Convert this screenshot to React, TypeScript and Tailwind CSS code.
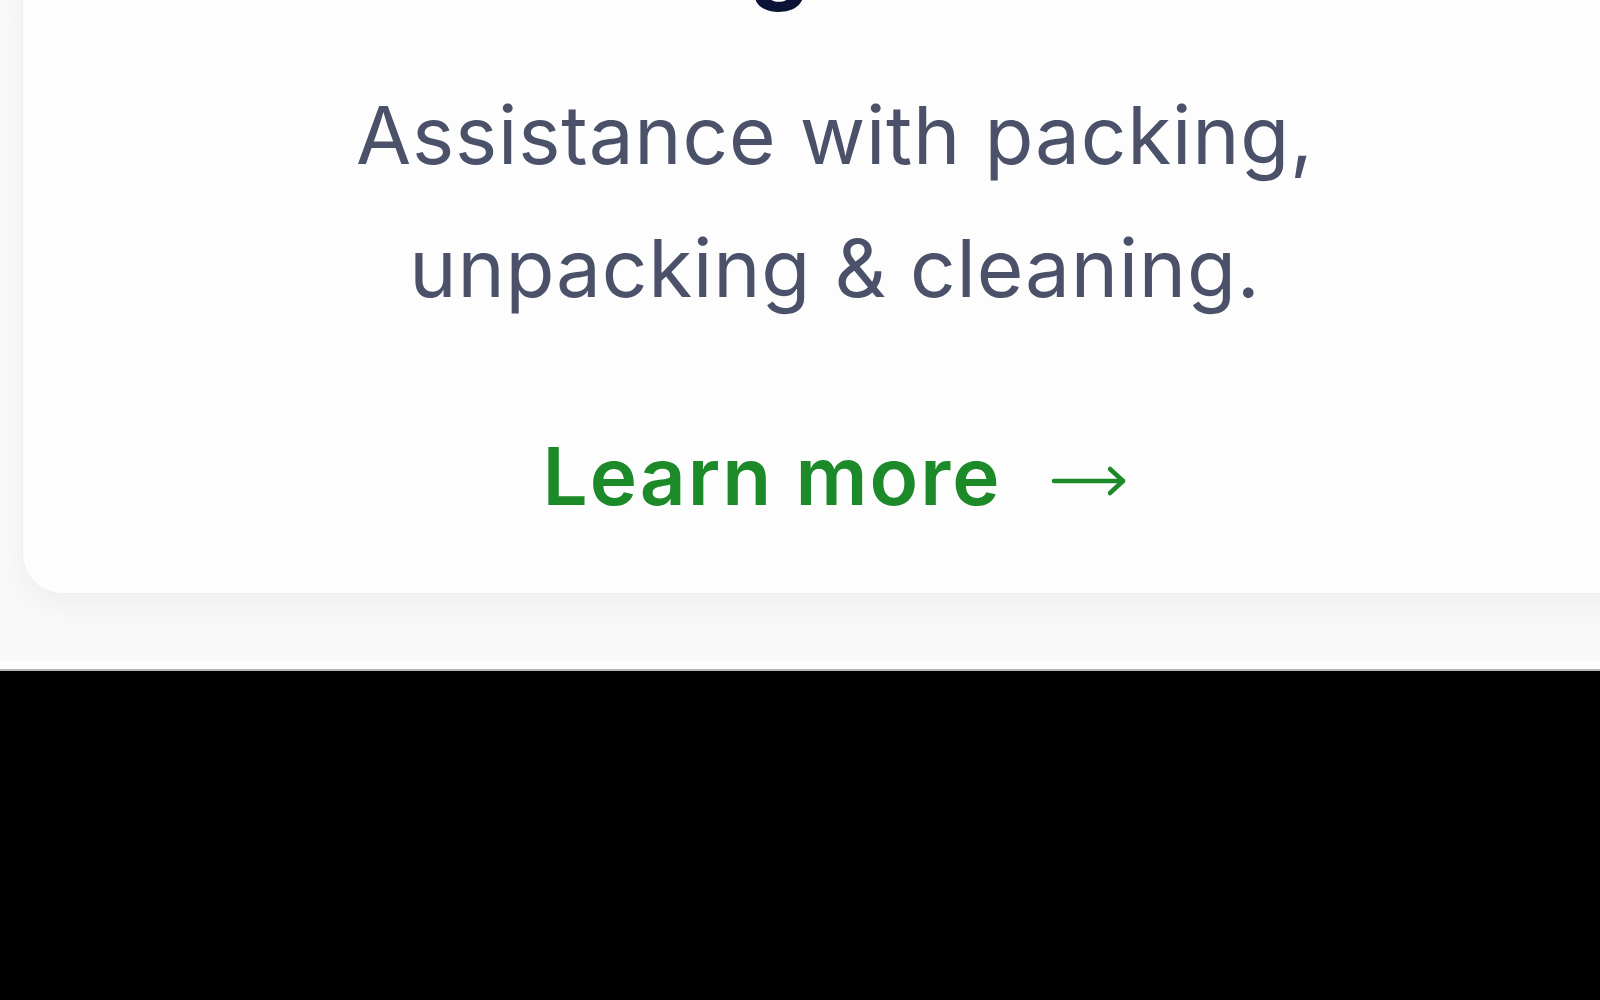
export default function App() {
  return (
    <div className="w-[1600px] h-[1000px] overflow-hidden bg-black flex flex-col" style={{ fontFamily: 'Inter, "Liberation Sans", sans-serif' }}>
      <section className="h-[661px] bg-[#f9f9f9] pl-[22px] overflow-hidden">
        <div className="w-[1626px] h-[614px] -mt-[20px] rounded-b-[40px] bg-[#fdfdfd] border border-[#efefef] shadow-[0_12px_30px_rgba(0,0,0,0.045)] flex flex-col items-center">
          <h2 className="text-[96px] leading-[96px] font-bold text-[#0b1437] -mt-[73px] tracking-tight">
            Packing Services
          </h2>
          <p className="mt-[64px] text-[80px] leading-[133px] text-[#4a5169] text-center tracking-[0.01em]">
            Assistance with packing,
            <br />
            unpacking &amp; cleaning.
          </p>
          <a href="#" className="mt-[92px] flex items-center gap-[50px] text-[80px] leading-[100px] font-[580] text-[#1d8a2a] tracking-[0.025em]">
            <span>Learn more</span>
            <svg width="76" height="40" viewBox="0 0 76 40" fill="none" stroke="currentColor" strokeWidth="4.5" strokeLinecap="round" strokeLinejoin="round" className="mt-[10px]">
              <path d="M3 20H72" />
              <path d="M59 8L72 20L59 32" />
            </svg>
          </a>
        </div>
      </section>
      <div className="h-[10px] bg-white border-b-[2px] border-[#b5b5b5]" />
      <div className="flex-1 bg-black" />
    </div>
  );
}
